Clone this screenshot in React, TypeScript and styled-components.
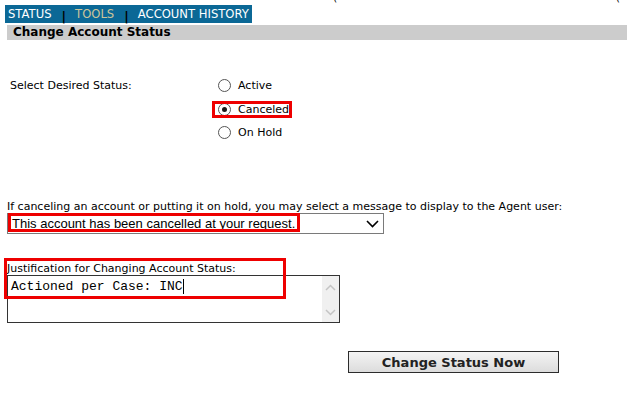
import React from 'react';
import styled, { createGlobalStyle } from 'styled-components';

const GlobalStyle = createGlobalStyle`
  html, body {
    margin: 0;
    padding: 0;
    background: #ffffff;
  }
  body {
    font-family: "DejaVu Sans", Verdana, sans-serif;
    font-size: 11px;
    color: #000;
  }
`;

const statuses = [
  { label: 'Active', checked: false, marked: false },
  { label: 'Canceled', checked: true, marked: true },
  { label: 'On Hold', checked: false, marked: false },
];

function App() {
  return (
    <>
      <GlobalStyle />
      <S.Page>
        <S.TopClip>
          <span>(</span>
          <span>(</span>
        </S.TopClip>

        <S.Tabs>
          <S.Tab>STATUS</S.Tab>
          <S.Sep>|</S.Sep>
          <S.Tab $active>TOOLS</S.Tab>
          <S.Sep>|</S.Sep>
          <S.Tab>ACCOUNT HISTORY</S.Tab>
        </S.Tabs>

        <S.SectionHeader>Change Account Status</S.SectionHeader>

        <S.StatusRow>
          <S.StatusLabel>Select Desired Status:</S.StatusLabel>
          <S.RadioList>
            {statuses.map((s) => (
              <S.RadioItem key={s.label}>
                <S.Radio $checked={s.checked} />
                <span>{s.label}</span>
                {s.marked && <S.Mark className="radio-mark" />}
              </S.RadioItem>
            ))}
          </S.RadioList>
        </S.StatusRow>

        <S.MessageText>
          If canceling an account or putting it on hold, you may select a message to display to the Agent user:
        </S.MessageText>
        <S.Select>
          <S.SelectValue>This account has been cancelled at your request.</S.SelectValue>
          <svg width="13" height="8" viewBox="0 0 13 8">
            <path d="M1 1 L6.5 6.5 L12 1" fill="none" stroke="#000" strokeWidth="1.6" />
          </svg>
          <S.Mark className="select-mark" />
        </S.Select>

        <S.Justify>
          <S.Mark className="justify-mark" />
          <S.JustifyLabel>Justification for Changing Account Status:</S.JustifyLabel>
          <S.TextArea>
            <S.TextValue>
              Actioned per Case: INC<S.Caret />
            </S.TextValue>
            <S.ScrollTrack>
              <svg width="11" height="7" viewBox="0 0 11 7">
                <path d="M1 6 L5.5 1.5 L10 6" fill="none" stroke="#c4c4c4" strokeWidth="1.5" />
              </svg>
              <svg width="11" height="7" viewBox="0 0 11 7">
                <path d="M1 1 L5.5 5.5 L10 1" fill="none" stroke="#c4c4c4" strokeWidth="1.5" />
              </svg>
            </S.ScrollTrack>
          </S.TextArea>
        </S.Justify>

        <S.ButtonRow>
          <S.Button>Change Status Now</S.Button>
        </S.ButtonRow>
      </S.Page>
    </>
  );
}

const S = {
  Page: styled.div`
    position: relative;
    width: 627px;
    height: 394px;
    overflow: hidden;
    padding-top: 5px;
    box-sizing: border-box;
  `,
  TopClip: styled.div`
    position: absolute;
    top: -8px;
    left: 333px;
    width: 287px;
    display: flex;
    justify-content: space-between;
    font-size: 11px;
    line-height: 12px;
  `,
  Tabs: styled.div`
    display: flex;
    align-items: center;
    width: fit-content;
    height: 18px;
    margin-left: 5px;
    padding: 0 3px;
    box-sizing: border-box;
    background: #0b6896;
    font-size: 11.6px;
    white-space: nowrap;
  `,
  Tab: styled.span<{ $active?: boolean }>`
    color: ${(p) => (p.$active ? '#cdc59a' : '#ffffff')};
  `,
  Sep: styled.span`
    color: #000;
    font-weight: bold;
    font-size: 12.5px;
    margin: 0 9px 0 10px;
    position: relative;
    top: 2px;
  `,
  SectionHeader: styled.div`
    margin: 2px 0 0 7px;
    height: 15px;
    line-height: 15px;
    padding-left: 6px;
    background: #cccccc;
    font-weight: bold;
    font-size: 12px;
  `,
  StatusRow: styled.div`
    display: grid;
    grid-template-columns: 208px 1fr;
    margin: 37px 0 0 10px;
  `,
  StatusLabel: styled.div`
    line-height: 17px;
  `,
  RadioList: styled.div`
    display: flex;
    flex-direction: column;
    gap: 6.5px;
  `,
  RadioItem: styled.label`
    position: relative;
    display: flex;
    align-items: center;
    gap: 7px;
    height: 17px;

    .radio-mark {
      left: -6px;
      top: 0;
      width: 80px;
      height: 17px;
    }
  `,
  Radio: styled.span<{ $checked: boolean }>`
    width: 11px;
    height: 11px;
    border: 1px solid #555;
    border-radius: 50%;
    background: #fff;
    display: inline-flex;
    align-items: center;
    justify-content: center;

    &::after {
      content: '';
      width: 5px;
      height: 5px;
      border-radius: 50%;
      background: ${(p) => (p.$checked ? '#1a1a1a' : 'transparent')};
    }
  `,
  Mark: styled.div`
    position: absolute;
    border: 3px solid #ee0000;
    box-sizing: border-box;
    pointer-events: none;
  `,
  MessageText: styled.div`
    margin: 60px 0 0 7px;
    white-space: nowrap;
    line-height: 12px;
  `,
  Select: styled.div`
    position: relative;
    display: flex;
    align-items: center;
    justify-content: space-between;
    width: 377px;
    height: 21px;
    margin-left: 7px;
    padding: 0 3px 0 4px;
    box-sizing: border-box;
    border: 1px solid #7a7a7a;
    background: #fff;

    svg {
      margin-right: 1px;
    }

    .select-mark {
      left: 0;
      top: -1px;
      width: 292px;
      height: 19px;
    }
  `,
  SelectValue: styled.span`
    font-family: "Liberation Sans", Arial, sans-serif;
    font-size: 13px;
    white-space: nowrap;
  `,
  Justify: styled.div`
    position: relative;
    margin: 28px 0 0 7px;

    .justify-mark {
      left: -3px;
      top: -4px;
      width: 282px;
      height: 41px;
    }
  `,
  JustifyLabel: styled.div`
    line-height: 13px;
  `,
  TextArea: styled.div`
    display: flex;
    justify-content: space-between;
    width: 333px;
    height: 48px;
    border: 1px solid #333;
    box-sizing: border-box;
    background: #fff;
  `,
  TextValue: styled.div`
    font-family: "Liberation Mono", "Courier New", monospace;
    font-size: 13px;
    padding: 3px 0 0 3px;
    display: flex;
    align-items: flex-start;
    line-height: 15px;
  `,
  Caret: styled.span`
    display: inline-block;
    width: 1px;
    height: 15px;
    background: #000;
  `,
  ScrollTrack: styled.div`
    width: 17px;
    background: #f0f0f0;
    display: flex;
    flex-direction: column;
    align-items: center;
    justify-content: space-between;
    padding: 8px 0 6px;
    box-sizing: border-box;
  `,
  ButtonRow: styled.div`
    display: flex;
    margin: 28px 0 0 348px;
  `,
  Button: styled.button`
    width: 211px;
    height: 22px;
    padding: 0;
    border: 1px solid #2c2c2c;
    background: linear-gradient(#f4f4f4, #dcdcdc);
    font-family: "DejaVu Sans", Verdana, sans-serif;
    font-weight: bold;
    font-size: 13px;
    color: #222;
    cursor: pointer;
  `,
};

export default App;
